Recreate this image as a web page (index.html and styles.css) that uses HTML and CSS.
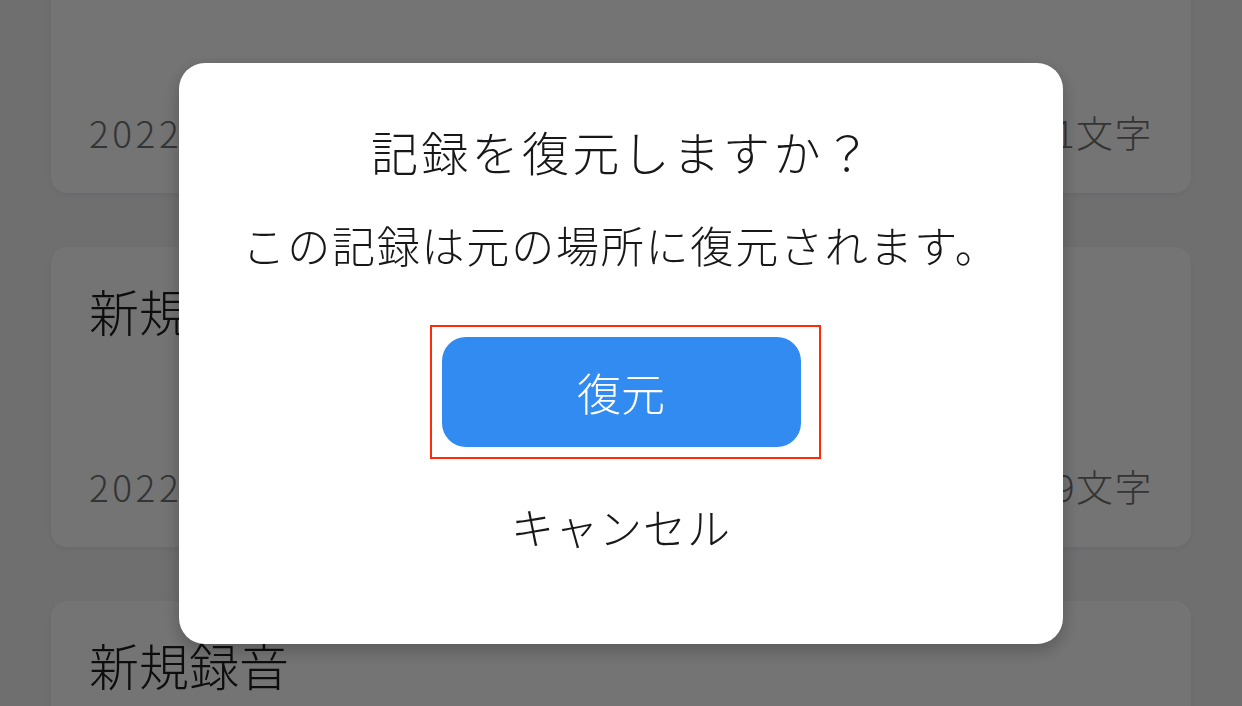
FILE: index.html
```html
<!DOCTYPE html>
<html lang="ja">
<head>
<meta charset="utf-8">
<title>記録を復元</title>
<link rel="stylesheet" href="styles.css">
</head>
<body>
<div class="list">
  <div class="card">
    <div class="card-title">新規録音</div>
    <div class="card-meta"><span class="date">2022/10/12 15:20</span><span>11文字</span></div>
  </div>
  <div class="card">
    <div class="card-title">新規録音</div>
    <div class="card-meta"><span class="date">2022/10/11 09:42</span><span>29文字</span></div>
  </div>
  <div class="card">
    <div class="card-title">新規録音</div>
    <div class="card-meta"><span class="date">2022/10/10 18:05</span><span>8文字</span></div>
  </div>
</div>

<div class="overlay">
  <div class="dialog">
    <div class="dialog-title">記録を復元しますか？</div>
    <div class="dialog-text">この記録は元の場所に復元されます。</div>
    <div class="highlight">
      <button class="btn-primary">復元</button>
    </div>
    <button class="btn-cancel">キャンセル</button>
  </div>
</div>
</body>
</html>
```

FILE: styles.css
```css
* { box-sizing: border-box; }
html, body {
  margin: 0;
  padding: 0;
  width: 1242px;
  height: 706px;
  overflow: hidden;
  background: #f4f4f7;
  font-family: "Noto Sans CJK JP", "Noto Sans", sans-serif;
  font-weight: 300;
}
.list {
  display: flex;
  flex-direction: column;
  gap: 54px;
  padding: 0 51px;
  margin-top: -107px;
}
.card {
  background: #ffffff;
  border-radius: 16px;
  height: 300px;
  padding: 30px 38px 37px 38px;
  display: flex;
  flex-direction: column;
  justify-content: space-between;
  box-shadow: 0 2px 6px rgba(0,0,0,0.06);
}
.card-title {
  font-size: 50px;
  line-height: 66px;
  color: #1e1e1e;
}
.card-meta {
  display: flex;
  justify-content: space-between;
  font-size: 37px;
  line-height: 48px;
  letter-spacing: 1.5px;
  color: #737373;
}
.date {
  letter-spacing: 3.5px;
}
.overlay {
  position: fixed;
  inset: 0;
  background: rgba(0,0,0,0.545);
  display: flex;
  align-items: center;
  justify-content: center;
}
.dialog {
  width: 884px;
  height: 581px;
  background: #ffffff;
  border-radius: 26px;
  box-shadow: 0 6px 18px rgba(0,0,0,0.25);
  display: flex;
  flex-direction: column;
  align-items: center;
  padding-top: 55px;
  color: #18181a;
}
.dialog-title {
  font-size: 47px;
  line-height: 66px;
  letter-spacing: 3.3px;
  padding-left: 3px;
}
.dialog-text {
  margin-top: 29px;
  font-size: 43px;
  line-height: 62px;
  letter-spacing: 1.8px;
}
.highlight {
  margin-top: 50px;
  border: 2px solid #ff2a0a;
  padding: 10px 18px 10px 10px;
  margin-left: 8px;
}
.btn-primary {
  display: block;
  width: 359px;
  height: 110px;
  border: none;
  border-radius: 24px;
  background: #318bf0;
  color: #ffffff;
  font-family: inherit;
  font-weight: 300;
  font-size: 44px;
  padding: 0;
}
.btn-cancel {
  margin-top: 36px;
  border: none;
  background: none;
  font-family: inherit;
  font-weight: 300;
  font-size: 43px;
  line-height: 62px;
  color: #18181a;
  padding: 0;
  letter-spacing: 1px;
}
```
